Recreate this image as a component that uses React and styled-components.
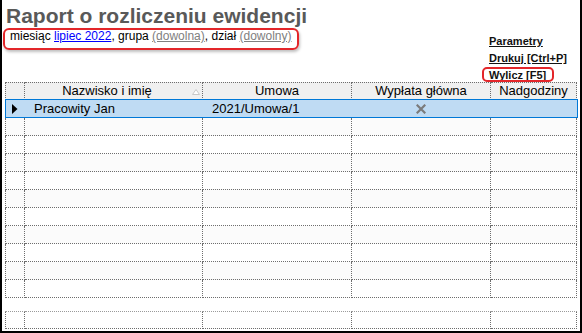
import React from "react";
import styled, { createGlobalStyle, css } from "styled-components";

const GlobalStyle = createGlobalStyle`
  html, body { margin: 0; padding: 0; background: #fff; }
  body { font-family: "Liberation Sans", Arial, sans-serif; }
  * { box-sizing: border-box; }
`;

const Frame = styled.div`
  width: 582px;
  height: 333px;
  border: 2px solid #000;
  border-top: none;
  background: #fff;
  display: flex;
  flex-direction: column;
  overflow: hidden;
`;

const Top = styled.div`
  height: 82px;
  display: flex;
  justify-content: space-between;
  align-items: flex-start;
  flex: none;
`;

const TitleBlock = styled.div`
  display: flex;
  flex-direction: column;
  align-items: flex-start;
`;

const Title = styled.h1`
  margin: 4px 0 0 4px;
  font-size: 21px;
  line-height: 24px;
  font-weight: bold;
  color: #595959;
  white-space: nowrap;
`;

const FilterBox = styled.div`
  margin-left: 1px;
  border: 2px solid #e3262a;
  border-radius: 6px;
  box-shadow: 1px 2px 3px rgba(0, 0, 0, 0.25);
  padding: 0 5px 6px 5px;
  font-size: 12px;
  line-height: 12px;
  color: #000;
  white-space: nowrap;
`;

const FilterLink = styled.a`
  color: ${(p) => (p.$muted ? "#808080" : "#0000ff")};
  text-decoration: underline;
  cursor: pointer;
`;

const Actions = styled.div`
  width: 91px;
  flex: none;
  padding-top: 33px;
  display: flex;
  flex-direction: column;
  align-items: flex-start;
`;

const ActionLink = styled.a`
  position: relative;
  display: inline-block;
  font-size: 11px;
  line-height: 17px;
  font-weight: bold;
  color: #111;
  text-decoration: underline;
  white-space: nowrap;
  cursor: pointer;
  ${(p) =>
    p.$highlight &&
    css`
      &::after {
        content: "";
        position: absolute;
        left: -7px;
        right: -8px;
        top: 0;
        bottom: 2px;
        border: 2px solid #e3262a;
        border-radius: 5px;
      }
    `}
`;

const Grid = styled.div`
  margin-left: 3px;
  width: 573px;
  display: flex;
  flex-direction: column;
`;

const COLS = "20px 178px 149px 139px 86px";
const DOT = "1px dotted #6d6d6d";

const Row = styled.div`
  display: grid;
  grid-template-columns: ${COLS};
  position: relative;
  background: ${(p) => (p.$shaded ? "#fbfbfb" : "#fff")};
  ${(p) =>
    p.$selected &&
    css`
      background: #bfdbf3;
      z-index: 1;
      &::after {
        content: "";
        position: absolute;
        left: 0;
        right: 0;
        top: -1px;
        bottom: 0;
        border: 1px solid #0078d7;
        pointer-events: none;
      }
    `}
`;

const Cell = styled.div`
  height: 18px;
  border-right: ${DOT};
  border-bottom: ${DOT};
  font-size: 13px;
  line-height: 17px;
  color: #000;
  white-space: nowrap;
  overflow: hidden;
  display: flex;
  align-items: center;
  justify-content: ${(p) => (p.$center ? "center" : "flex-start")};
  padding-left: ${(p) => (p.$pad ? `${p.$pad}px` : "0")};
  &:first-child { border-left: ${DOT}; }
  ${(p) =>
    p.$selected &&
    css`
      border-right-color: transparent;
    `}
`;

const HeadCell = styled.div`
  position: relative;
  height: 18px;
  background: #f0f0f0;
  border-top: ${DOT};
  border-right: ${DOT};
  border-bottom: ${DOT};
  font-size: 13px;
  line-height: 16px;
  color: #000;
  text-align: center;
  white-space: nowrap;
  padding-right: ${(p) => (p.$sorted ? "13px" : "0")};
  &:first-child { border-left: ${DOT}; }
`;

const SortMark = styled.svg`
  position: absolute;
  right: 2px;
  top: 6px;
`;

const Spacer = styled.div`
  height: 13px;
`;

const FootCell = styled(Cell)`
  height: 18px;
  border-top: 1px dotted #9a9a9a;
`;

const RowPointer = () => (
  <svg width="6" height="10" viewBox="0 0 6 10">
    <polygon points="0,0 5.5,5 0,10" fill="#000" />
  </svg>
);

const Cross = () => (
  <svg width="10" height="10" viewBox="0 0 10 10">
    <path d="M1.5 1.5 L8.5 8.5 M8.5 1.5 L1.5 8.5" stroke="#7b7b7b" strokeWidth="2.2" strokeLinecap="square" />
  </svg>
);

const rows = [
  { name: "Pracowity Jan", umowa: "2021/Umowa/1", main: true },
  ...Array.from({ length: 10 }, () => null),
];

export default function App() {
  return (
    <>
      <GlobalStyle />
      <Frame>
        <Top>
          <TitleBlock>
            <Title>Raport o rozliczeniu ewidencji</Title>
            <FilterBox>
              miesiąc <FilterLink>lipiec 2022</FilterLink>, grupa{" "}
              <FilterLink $muted>(dowolna)</FilterLink>, dział{" "}
              <FilterLink $muted>(dowolny)</FilterLink>
            </FilterBox>
          </TitleBlock>
          <Actions>
            <ActionLink>Parametry</ActionLink>
            <ActionLink>Drukuj [Ctrl+P]</ActionLink>
            <ActionLink $highlight>Wylicz [F5]</ActionLink>
          </Actions>
        </Top>
        <Grid>
          <Row>
            <HeadCell />
            <HeadCell $sorted>
              Nazwisko i imię
              <SortMark width="8" height="6" viewBox="0 0 8 6">
                <polygon points="4,0.5 7.5,5.5 0.5,5.5" fill="#fff" stroke="#c8c8c8" strokeWidth="1" />
              </SortMark>
            </HeadCell>
            <HeadCell>Umowa</HeadCell>
            <HeadCell>Wypłata główna</HeadCell>
            <HeadCell>Nadgodziny</HeadCell>
          </Row>
          {rows.map((r, i) =>
            r ? (
              <Row key={i} $selected>
                <Cell $selected $center>
                  <RowPointer />
                </Cell>
                <Cell $selected $pad={9}>{r.name}</Cell>
                <Cell $selected $pad={9}>{r.umowa}</Cell>
                <Cell $selected $center>{r.main && <Cross />}</Cell>
                <Cell $selected />
              </Row>
            ) : (
              <Row key={i} $shaded={i % 2 === 1}>
                <Cell />
                <Cell />
                <Cell />
                <Cell />
                <Cell />
              </Row>
            )
          )}
          <Spacer />
          <Row>
            <FootCell />
            <FootCell />
            <FootCell />
            <FootCell />
            <FootCell />
          </Row>
        </Grid>
      </Frame>
    </>
  );
}
